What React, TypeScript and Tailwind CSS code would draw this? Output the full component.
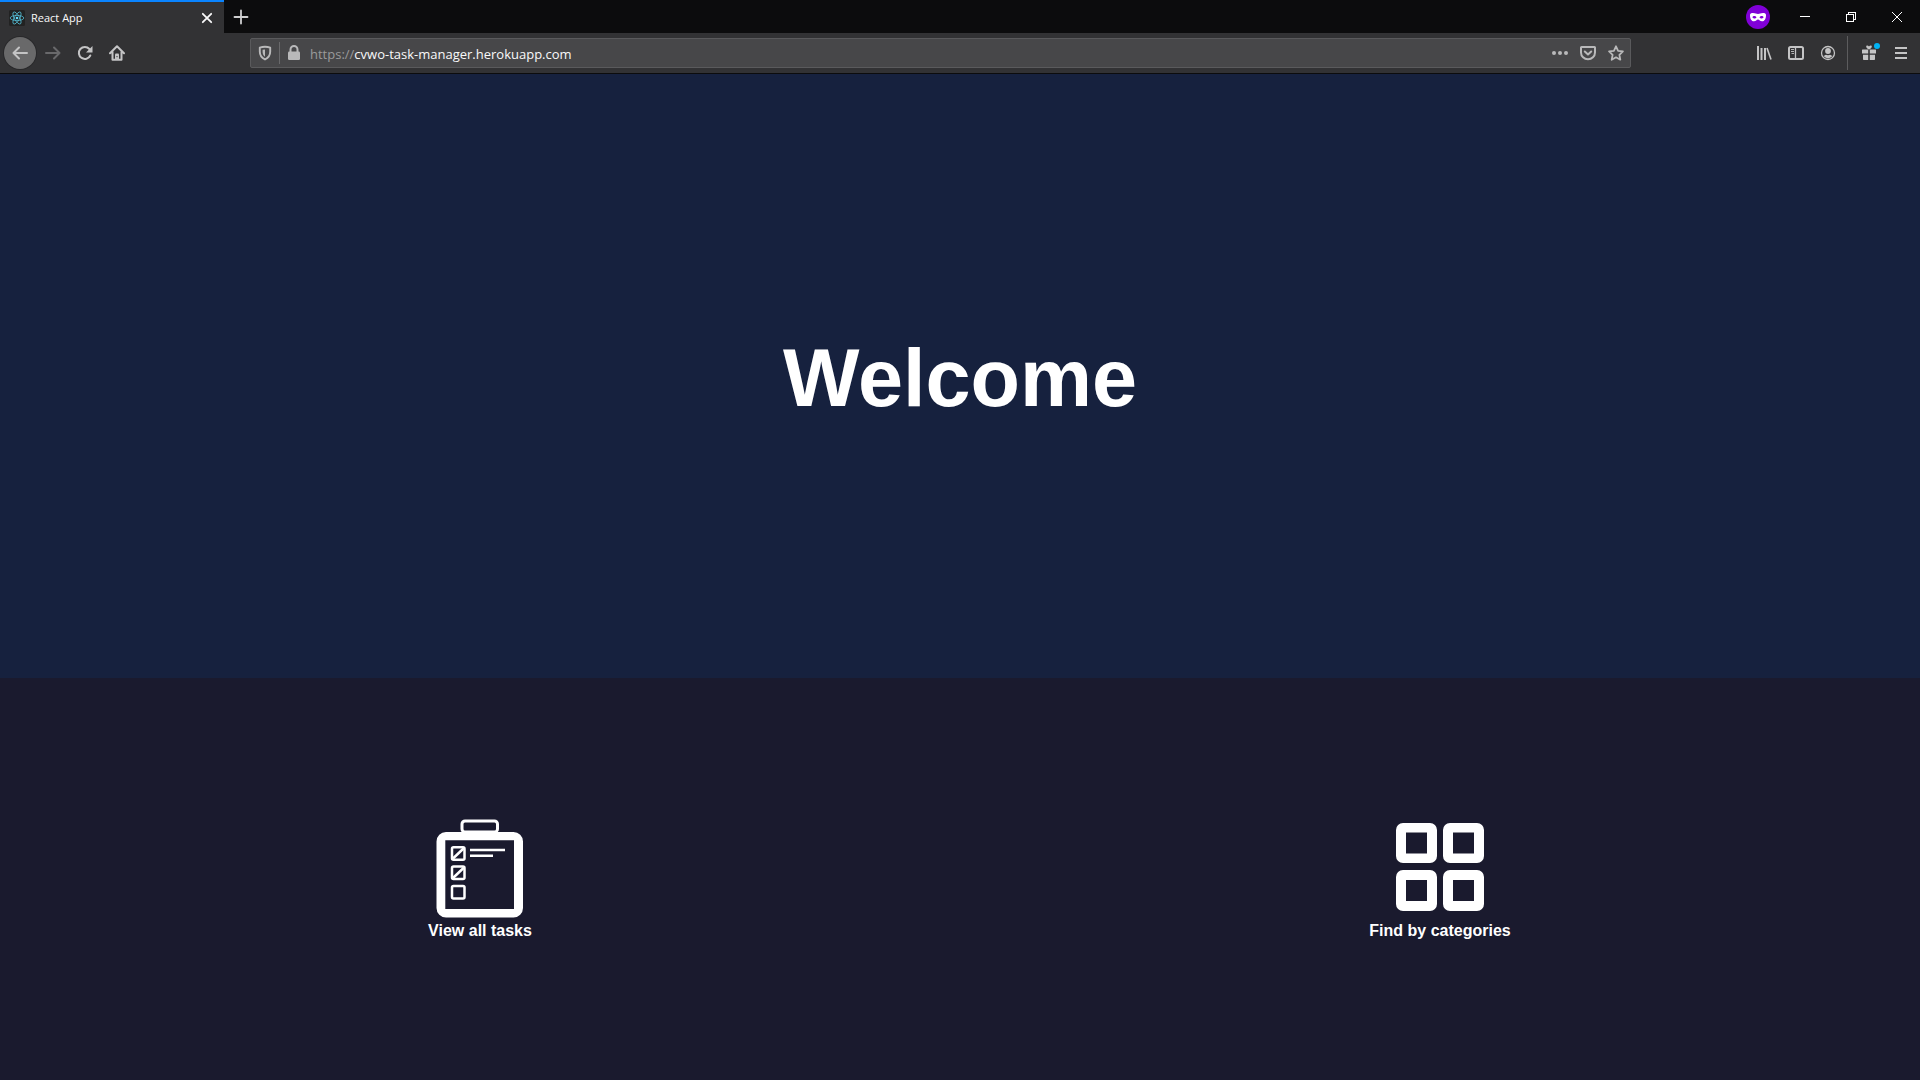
import type { ReactNode } from "react";

function ToolButton({ label, children, className = "" }: { label: string; children: ReactNode; className?: string }) {
  return (
    <button type="button" aria-label={label} title={label} className={`flex h-8 w-8 shrink-0 items-center justify-center ${className}`}>
      {children}
    </button>
  );
}

function Line({ children, size = 16, width = 2 }: { children: ReactNode; size?: number; width?: number }) {
  return (
    <svg width={size} height={size} viewBox="0 0 16 16" fill="none" stroke="currentColor" strokeWidth={width} strokeLinecap="round" strokeLinejoin="round" aria-hidden="true">
      {children}
    </svg>
  );
}

function ReactLogo() {
  return (
    <svg width="16" height="16" viewBox="0 0 16 16" fill="none" stroke="#53b9d1" strokeWidth="0.8" aria-hidden="true">
      <rect width="16" height="16" rx="1.5" fill="#222222" stroke="none" />
      <ellipse cx="8" cy="8" rx="6.8" ry="2.6" />
      <ellipse cx="8" cy="8" rx="6.8" ry="2.6" transform="rotate(60 8 8)" />
      <ellipse cx="8" cy="8" rx="6.8" ry="2.6" transform="rotate(120 8 8)" />
      <circle cx="8" cy="8" r="1.3" fill="#61dafb" stroke="none" />
    </svg>
  );
}

function TabBar() {
  return (
    <header className="flex h-[33px] shrink-0 items-stretch bg-[#0c0c0d] text-[#f9f9fa]">
      <div className="flex w-56 items-center border-t-2 border-[#0a84ff] bg-[#323234] pr-[7px] pl-[9px]">
        <ReactLogo />
        <span className="ml-1.5 flex-1 font-['Open_Sans',sans-serif] text-[11px] leading-4">React App</span>
        <button type="button" aria-label="Close tab" className="flex h-5 w-5 items-center justify-center">
          <Line size={16} width={1.8}><path d="M3.8 3.8l8.4 8.4M12.2 3.8l-8.4 8.4" /></Line>
        </button>
      </div>
      <button type="button" aria-label="New tab" className="ml-px flex w-8 items-center justify-center text-[#cfcfd0]">
        <Line width={1.8}><path d="M8 1.5v13M1.5 8h13" /></Line>
      </button>
      <div className="ml-auto flex items-center">
        <svg width="24" height="24" viewBox="0 0 24 24" className="mr-3" role="img" aria-label="Private browsing">
          <circle cx="12" cy="12" r="12" fill="#8000d7" />
          <path fill="#fff" fillRule="evenodd" d="M4 10.2C4 8.4 5.300 8 7 8c2.400 0 3.400 1 5 1s2.600-1 5-1c1.700 0 3 .4 3 2.200 0 3.600-1.500 6.100-4 6.100-2 0-2.600-1.800-4-1.800s-2 1.800-4 1.800c-2.500 0-4-2.500-4-6.100zM6.300 12.300c.8.9 1.500 1.200 2.300 1.200s1.400-.4 1.900-1.100c-.6-.9-1.300-1.400-2.200-1.400s-1.500.5-2 1.300zm7.200.1c.5.700 1.100 1.100 1.900 1.100s1.500-.3 2.300-1.200c-.5-.8-1.100-1.300-2-1.300s-1.600.5-2.200 1.400z" />
        </svg>
        <button type="button" aria-label="Minimize" className="flex h-8 w-[46px] items-center justify-center">
          <svg width="10" height="10" viewBox="0 0 10 10" shapeRendering="crispEdges"><path d="M0 4.500h10" stroke="#fff" /></svg>
        </button>
        <button type="button" aria-label="Restore" className="flex h-8 w-[46px] items-center justify-center">
          <svg width="10" height="10" viewBox="0 0 10 10" fill="none" stroke="#fff" shapeRendering="crispEdges"><path d="M.5 2.500h7v7h-7zM2.500 2.500v-2h7v7h-2" /></svg>
        </button>
        <button type="button" aria-label="Close" className="flex h-8 w-[46px] items-center justify-center">
          <svg width="10" height="10" viewBox="0 0 10 10" fill="none" stroke="#fff"><path d="M0 0l10 10M10 0L0 10" /></svg>
        </button>
      </div>
    </header>
  );
}

function AddressBar() {
  return (
    <div className="flex h-[30px] min-w-0 flex-1 items-center rounded-[2px] border border-[#5a5a5c] bg-[#474749] text-[#b9b9ba]">
      <button type="button" aria-label="Tracking protection" className="flex w-7 shrink-0 items-center justify-center">
        <svg width="16" height="16" viewBox="0 0 16 16" aria-hidden="true">
          <path d="M8 1.800c2 0 3.700.3 5.200.8v4.200c0 3.400-1.800 6-5.200 7.700-3.400-1.700-5.200-4.300-5.200-7.700V2.600C4.300 2.100 6 1.800 8 1.800z" fill="none" stroke="currentColor" strokeWidth="1.900" strokeLinejoin="round" />
          <path d="M8 4.500v7.300C6.300 10.500 5.600 8.900 5.600 6.800V4.800z" fill="currentColor" />
        </svg>
      </button>
      <span className="h-[22px] w-px shrink-0 bg-[#69696b]" />
      <button type="button" aria-label="Site information" className="flex w-7 shrink-0 items-center justify-center">
        <svg width="16" height="16" viewBox="0 0 16 16" aria-hidden="true">
          <path d="M4.500 7.500V4.500a3.500 3.500 0 0 1 7 0v3" fill="none" stroke="currentColor" strokeWidth="2" />
          <rect x="2" y="6.500" width="12" height="8.500" rx="1.200" fill="currentColor" />
        </svg>
      </button>
      <a href="https://cvwo-task-manager.herokuapp.com" className="min-w-0 flex-1 truncate pt-0.5 pl-0.5 font-['Open_Sans',sans-serif] text-[13px] leading-5 text-[#f9f9fa]">
        <span className="text-[#9a9a9b]">https://</span>cvwo-task-manager.herokuapp.com
      </a>
      <div className="flex shrink-0 items-center">
        <button type="button" aria-label="Page actions" className="flex w-7 items-center justify-center">
          <svg width="16" height="16" viewBox="0 0 16 16" fill="currentColor" aria-hidden="true"><circle cx="2" cy="8" r="2" /><circle cx="8" cy="8" r="2" /><circle cx="14" cy="8" r="2" /></svg>
        </button>
        <button type="button" aria-label="Save to Pocket" className="flex w-7 items-center justify-center">
          <Line><path d="M1.500 2h13a.5.5 0 0 1 .5.5V7.500a7 6.800 0 0 1-14 0V2.500a.5.5 0 0 1 .5-.5zM4.800 6.500L8 9.500l3.200-3" /></Line>
        </button>
        <button type="button" aria-label="Bookmark this page" className="flex w-7 items-center justify-center">
          <Line width={1.8}><path d="M8 1.300l2.100 4.500 4.800.6-3.500 3.400.9 4.900L8 12.300l-4.300 2.400.9-4.900L1.100 6.400l4.800-.6z" /></Line>
        </button>
      </div>
    </div>
  );
}

function Toolbar() {
  return (
    <nav aria-label="Browser toolbar" className="flex h-[41px] shrink-0 items-center border-b border-[#0c0c0d] bg-[#323234] pr-[3px] pl-1 text-[#c4c4c5]">
      <ToolButton label="Back" className="rounded-full bg-[#69696a] shadow-[0_0_0_1px_#29292b]">
        <Line><path d="M15 8H1.500M7 2.500L1.500 8 7 13.500" /></Line>
      </ToolButton>
      <div className="ml-px mr-[117px] flex">
        <ToolButton label="Forward" className="text-[#69696b]">
          <Line><path d="M1 8h13.500M9 2.500L14.500 8 9 13.500" /></Line>
        </ToolButton>
        <ToolButton label="Reload">
          <svg width="16" height="16" viewBox="0 0 16 16" aria-hidden="true">
            <path d="M13.300 10.500A6 6 0 1 1 12.400 4" fill="none" stroke="currentColor" strokeWidth="2" strokeLinecap="round" />
            <path d="M15.500 1v6.500H9z" fill="currentColor" />
          </svg>
        </ToolButton>
        <ToolButton label="Home">
          <svg width="16" height="16" viewBox="0 0 16 16" aria-hidden="true">
            <path d="M1 8.300L8 1.300l7 7M3.500 7v7.800h9V7" fill="none" stroke="currentColor" strokeWidth="2" strokeLinecap="round" strokeLinejoin="round" />
            <path d="M6 15V9.500a1 1 0 0 1 1-1h2a1 1 0 0 1 1 1V15z" fill="currentColor" />
            <path d="M8 11v1.200" stroke="#323234" strokeWidth="1" />
          </svg>
        </ToolButton>
      </div>
      <AddressBar />
      <div className="ml-[117px] flex items-center">
        <ToolButton label="Library">
          <svg width="16" height="16" viewBox="0 0 16 16" fill="none" stroke="currentColor" aria-hidden="true"><path d="M2 1v14M5.500 3v12M9 3v12" strokeWidth="2" /><path d="M11 3l4 11.500" strokeWidth="1.600" /></svg>
        </ToolButton>
        <ToolButton label="Sidebars">
          <svg width="16" height="16" viewBox="0 0 16 16" fill="none" stroke="currentColor" aria-hidden="true"><rect x="1" y="2" width="14" height="12" rx="1.500" strokeWidth="2" /><path d="M7.500 2v12" strokeWidth="1.300" /><path d="M3 4.500h3M3 6.500h3M3.500 8.500h2.500" strokeWidth="0.900" /></svg>
        </ToolButton>
        <ToolButton label="Account">
          <svg width="16" height="16" viewBox="0 0 16 16" aria-hidden="true"><circle cx="8" cy="8" r="6.500" fill="none" stroke="currentColor" strokeWidth="1.300" /><circle cx="8" cy="6" r="2.900" fill="currentColor" /><path d="M3.500 10.800c1 .3 1.300-1 2.500-1 .6.500 3.400.5 4 0 1.200 0 1.500 1.300 2.500 1-1 1.600-2.600 2.500-4.500 2.500s-3.500-.9-4.500-2.500z" fill="currentColor" /></svg>
        </ToolButton>
        <span className="mr-[5px] ml-[3px] h-[34px] w-px bg-[#5c5c5e]" />
        <ToolButton label="What's new" className="relative">
          <svg width="16" height="16" viewBox="0 0 16 16" fill="currentColor" aria-hidden="true"><path d="M1.500 4.500h5.700v4H1V5a.5.5 0 0 1 .5-.5zM8.800 4.500h5.700a.5.5 0 0 1 .5.5v3.500H8.800zM2 9.800h5.200V15H2.800a.8.8 0 0 1-.8-.8zM8.800 9.800H14v4.400a.8.8 0 0 1-.8.8H8.800zM8 4.500C6.500 3.700 5.200 2.600 5.200 1.400 5.200.2 7 .1 8 1.400 9 .1 10.800.2 10.800 1.400c0 1.200-1.300 2.300-2.800 3.100z" /></svg>
          <span className="absolute top-1.5 right-[5px] h-1.5 w-1.5 rounded-full bg-[#00b3f4]" />
        </ToolButton>
        <ToolButton label="Open menu">
          <Line><path d="M3 3h10M3 8h10M3 13h10" strokeLinecap="square" /></Line>
        </ToolButton>
      </div>
    </nav>
  );
}

function ClipboardIcon() {
  return (
    <svg width="88" height="100" viewBox="0 0 88 100" fill="none" stroke="#fff" aria-hidden="true">
      <rect x="26" y="2" width="35.500" height="11" rx="3" strokeWidth="3" />
      <path fill="#fff" stroke="none" fillRule="evenodd" d="M10 13h67.500a9.500 9.500 0 0 1 9.500 9.500v66.500a9.500 9.500 0 0 1-9.500 9.500H10a9.500 9.500 0 0 1-9.500-9.500V22.500A9.500 9.500 0 0 1 10 13zM9.300 21.300v68.700H78V21.300z" />
      <g strokeWidth="2.500">
        <rect x="16" y="28.200" width="12.500" height="12.500" rx="1.500" />
        <rect x="16" y="47.500" width="12.500" height="12.500" rx="1.500" />
        <rect x="16" y="67" width="12.500" height="12.500" rx="1.500" />
        <path d="M17 39.500l11-10.500M17 59l11-10.500M34 31h35M34 36.700h23" />
      </g>
    </svg>
  );
}

function GridIcon() {
  return (
    <svg width="88" height="100" viewBox="0 0 88 100" fill="#fff" aria-hidden="true">
      <path fillRule="evenodd" d="M7 4h27a7 7 0 0 1 7 7v26a7 7 0 0 1-7 7H7a7 7 0 0 1-7-7V11a7 7 0 0 1 7-7zM10 13.500v21h21v-21zM54 4h27a7 7 0 0 1 7 7v26a7 7 0 0 1-7 7H54a7 7 0 0 1-7-7V11a7 7 0 0 1 7-7zM57 13.500v21h21v-21zM7 51h27a7 7 0 0 1 7 7v27a7 7 0 0 1-7 7H7a7 7 0 0 1-7-7V58a7 7 0 0 1 7-7zM10 61v21h21V61zM54 51h27a7 7 0 0 1 7 7v27a7 7 0 0 1-7 7H54a7 7 0 0 1-7-7V58a7 7 0 0 1 7-7zM57 61v21h21V61z" />
    </svg>
  );
}

function HomeLink({ href, label, children }: { href: string; label: string; children: ReactNode }) {
  return (
    <a href={href} className="flex flex-col items-center pt-1 text-[16px] leading-6 font-bold text-white">
      {children}
      {label}
    </a>
  );
}

export default function App() {
  return (
    <div className="flex min-h-screen flex-col bg-[#1a1a2e] font-['Liberation_Sans',Arial,sans-serif]">
      <TabBar />
      <Toolbar />
      <main className="grid flex-1 grid-rows-[3fr_2fr]">
        <section className="flex items-center justify-center bg-[#16213e]">
          <h1 className="pt-1 font-['Arial_Rounded_MT_Bold','Liberation_Sans',sans-serif] text-[81px] leading-[96px] font-bold text-white">Welcome</h1>
        </section>
        <section className="grid grid-cols-2 place-items-center bg-[#1a1a2e]">
          <HomeLink href="#tasks" label="View all tasks"><ClipboardIcon /></HomeLink>
          <HomeLink href="#categories" label="Find by categories"><GridIcon /></HomeLink>
        </section>
      </main>
    </div>
  );
}
